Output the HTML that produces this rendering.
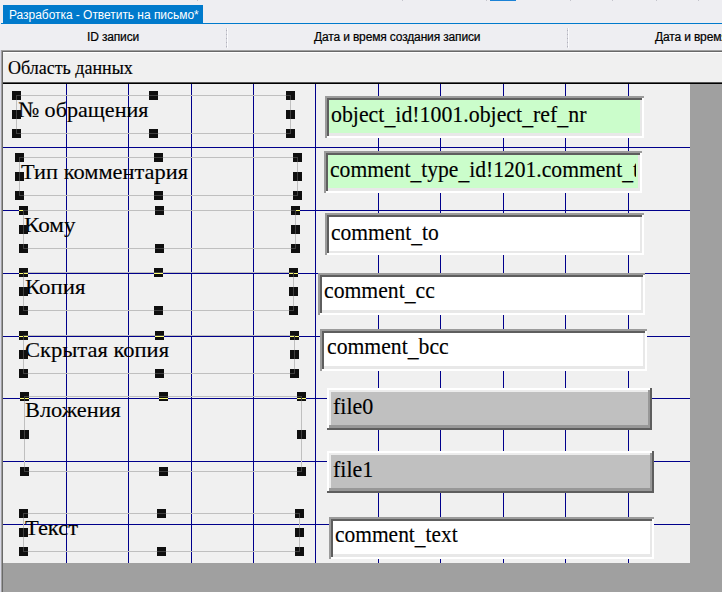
<!DOCTYPE html>
<html lang="ru"><head><meta charset="utf-8"><title>Разработка - Ответить на письмо</title>
<style>
html,body{margin:0;padding:0}
body{width:722px;height:592px;overflow:hidden;position:relative;background:#eeeef2;font-family:"Liberation Sans",sans-serif}
.a{position:absolute}
.tab{left:3px;top:5px;width:200px;height:19px;background:#007acc;color:#fff;font-size:12px;line-height:19px;white-space:nowrap}
.tab span{position:absolute;left:6px;top:0.5px;letter-spacing:-0.04px}
.tabline{left:1px;top:23px;width:721px;height:1px;background:#007acc}
.hdr{top:24px;height:26px;font-size:12px;color:#000;white-space:nowrap;line-height:26px;letter-spacing:-0.15px;-webkit-text-stroke:0.2px #000}
.sep{top:28px;width:1px;height:20px;background:repeating-linear-gradient(#d2d2da 0,#d2d2da 2px,#b2b2bc 2px,#b2b2bc 3px,#d2d2da 3px,#d2d2da 4px);border-right:1px solid #fbfbfd}
.ser{font-family:"Liberation Serif",serif;color:#000;white-space:nowrap;transform-origin:0 0;-webkit-text-stroke:0.15px #000}
.lab{font-size:22px;line-height:22px}
.ft{font-size:24px;line-height:24px}
.h{width:9px;height:9px;background:#0f0f0f;overflow:hidden}
.h i{position:absolute;display:block}
.vl{width:1px;background:#00008b;top:84px;height:479px}
.hl{height:1px;background:#00008b;left:3px;width:687px}
.rect{border:1px solid #bfbfbf;box-sizing:border-box}
.u{position:relative;top:2px}
.fld{box-sizing:border-box;overflow:hidden}
</style></head><body>

<div class="a" style="left:490px;top:0;width:26px;height:1px;background:#1b82d6"></div>
<div class="a" style="left:197px;top:0;width:1px;height:1px;background:#c4c4cc"></div>
<div class="a" style="left:402px;top:0;width:1px;height:1px;background:#c4c4cc"></div>
<div class="a" style="left:486px;top:0;width:1px;height:1px;background:#c4c4cc"></div>
<div class="a" style="left:570px;top:0;width:1px;height:1px;background:#c4c4cc"></div>
<div class="a" style="left:612px;top:0;width:1px;height:1px;background:#c4c4cc"></div>
<div class="a" style="left:656px;top:0;width:1px;height:1px;background:#c4c4cc"></div>
<div class="a" style="left:698px;top:0;width:1px;height:1px;background:#c4c4cc"></div>
<div class="a tabline"></div>
<div class="a tab"><span>Разработка - Ответить на письмо*</span></div>
<div class="a hdr" style="left:87px">ID записи</div>
<div class="a hdr" style="left:314px">Дата и время создания записи</div>
<div class="a hdr" style="left:655px">Дата и время изменения записи</div>
<div class="a sep" style="left:226px"></div><div class="a sep" style="left:567px"></div>
<div class="a" style="left:1px;top:50px;width:721px;height:542px;background:#a0a0a0"></div>
<div class="a" style="left:0;top:50px;width:1px;height:542px;background:#d8d8e6"></div>
<div class="a" style="left:1px;top:50px;width:721px;height:1px;background:#a0a0a0"></div>
<div class="a" style="left:1px;top:50px;width:1px;height:542px;background:#a0a0a0"></div>
<div class="a" style="left:2px;top:51px;width:720px;height:1px;background:#696969"></div>
<div class="a" style="left:2px;top:51px;width:1px;height:541px;background:#696969"></div>
<div class="a" style="left:3px;top:52px;width:719px;height:30px;background:#f0f0f0;border-top:1px solid #fff;box-sizing:border-box"></div>
<div class="a ser" style="left:8px;top:59.0px;font-size:18px;line-height:18px">Область данных</div>
<div class="a" style="left:3px;top:82px;width:719px;height:2px;background:#000;border-top:1px solid #555;box-sizing:border-box"></div>
<div class="a" style="left:3px;top:84px;width:687px;height:479px;background:#f0f0f0"></div>
<div class="a vl" style="left:66px"></div>
<div class="a vl" style="left:128px"></div>
<div class="a vl" style="left:191px"></div>
<div class="a vl" style="left:253px"></div>
<div class="a vl" style="left:315px"></div>
<div class="a vl" style="left:378px"></div>
<div class="a vl" style="left:440px"></div>
<div class="a vl" style="left:503px"></div>
<div class="a vl" style="left:565px"></div>
<div class="a vl" style="left:628px"></div>
<div class="a hl" style="top:147px"></div>
<div class="a hl" style="top:210px"></div>
<div class="a hl" style="top:273px"></div>
<div class="a hl" style="top:336px"></div>
<div class="a hl" style="top:398px"></div>
<div class="a hl" style="top:461px"></div>
<div class="a hl" style="top:524px"></div>
<div class="a fld" style="left:325px;top:96px;width:319px;height:42px;background:#9b9b9b"><div class="a" style="left:2px;top:2px;width:317px;height:40px;background:#fff"></div><div class="a" style="left:2px;top:2px;width:315px;height:38px;background:#5e5e5e"></div><div class="a" style="left:4px;top:4px;width:313px;height:36px;background:#e8e8e8"></div><div class="a" style="left:4px;top:4px;width:311px;height:33px;background:#cbfdcb"></div></div>
<div class="a" style="left:329px;top:100px;width:309px;height:33px;overflow:hidden"><div class="a ser ft" style="left:1.8px;top:1.5px;transform:scaleX(0.9104)">object<span class="u">_</span>id!1001.object<span class="u">_</span>ref<span class="u">_</span>nr</div></div>
<div class="a fld" style="left:324px;top:151px;width:318px;height:42px;background:#9b9b9b"><div class="a" style="left:2px;top:2px;width:316px;height:40px;background:#fff"></div><div class="a" style="left:2px;top:2px;width:314px;height:38px;background:#5e5e5e"></div><div class="a" style="left:4px;top:4px;width:312px;height:36px;background:#e8e8e8"></div><div class="a" style="left:4px;top:4px;width:310px;height:33px;background:#cbfdcb"></div></div>
<div class="a" style="left:328px;top:155px;width:308px;height:33px;overflow:hidden"><div class="a ser ft" style="left:1.9px;top:2.1px;transform:scaleX(0.9000)">comment<span class="u">_</span>type<span class="u">_</span>id!1201.comment<span class="u">_</span>t</div></div>
<div class="a fld" style="left:325px;top:213px;width:319px;height:42px;background:#9b9b9b"><div class="a" style="left:2px;top:2px;width:317px;height:40px;background:#fff"></div><div class="a" style="left:2px;top:2px;width:315px;height:38px;background:#5e5e5e"></div><div class="a" style="left:4px;top:4px;width:313px;height:36px;background:#e8e8e8"></div><div class="a" style="left:4px;top:4px;width:311px;height:34px;background:#ffffff"></div></div>
<div class="a" style="left:329px;top:217px;width:309px;height:33px;overflow:hidden"><div class="a ser ft" style="left:1.7px;top:2.5px;transform:scaleX(0.8979)">comment<span class="u">_</span>to</div></div>
<div class="a fld" style="left:318px;top:273px;width:327px;height:42px;background:#9b9b9b"><div class="a" style="left:2px;top:2px;width:325px;height:40px;background:#fff"></div><div class="a" style="left:2px;top:2px;width:323px;height:38px;background:#5e5e5e"></div><div class="a" style="left:4px;top:4px;width:321px;height:36px;background:#e8e8e8"></div><div class="a" style="left:4px;top:4px;width:319px;height:33px;background:#ffffff"></div></div>
<div class="a" style="left:322px;top:277px;width:317px;height:33px;overflow:hidden"><div class="a ser ft" style="left:2.2px;top:1.2px;transform:scaleX(0.9042)">comment<span class="u">_</span>cc</div></div>
<div class="a fld" style="left:320px;top:329px;width:327px;height:42px;background:#9b9b9b"><div class="a" style="left:2px;top:2px;width:325px;height:40px;background:#fff"></div><div class="a" style="left:2px;top:2px;width:323px;height:38px;background:#5e5e5e"></div><div class="a" style="left:4px;top:4px;width:321px;height:36px;background:#e8e8e8"></div><div class="a" style="left:4px;top:4px;width:319px;height:33px;background:#ffffff"></div></div>
<div class="a" style="left:324px;top:333px;width:317px;height:33px;overflow:hidden"><div class="a ser ft" style="left:3.0px;top:1.4px;transform:scaleX(0.9042)">comment<span class="u">_</span>bcc</div></div>
<div class="a fld" style="left:327px;top:388px;width:325px;height:42px;background:#5e5e5e"><div class="a" style="left:0px;top:0px;width:323px;height:40px;background:#fff"></div><div class="a" style="left:2px;top:2px;width:321px;height:38px;background:#989898"></div><div class="a" style="left:2px;top:2px;width:319px;height:35px;background:#ececec"></div><div class="a" style="left:4px;top:4px;width:317px;height:33px;background:#c0c0c0"></div></div>
<div class="a" style="left:331px;top:392px;width:315px;height:33px;overflow:hidden"><div class="a ser ft" style="left:1.9px;top:1.5px;transform:scaleX(0.9167)">file0</div></div>
<div class="a fld" style="left:327px;top:451px;width:327px;height:42px;background:#5e5e5e"><div class="a" style="left:0px;top:0px;width:325px;height:40px;background:#fff"></div><div class="a" style="left:2px;top:2px;width:323px;height:38px;background:#989898"></div><div class="a" style="left:2px;top:2px;width:321px;height:35px;background:#ececec"></div><div class="a" style="left:4px;top:4px;width:319px;height:33px;background:#c0c0c0"></div></div>
<div class="a" style="left:331px;top:455px;width:317px;height:33px;overflow:hidden"><div class="a ser ft" style="left:1.9px;top:1.6px;transform:scaleX(0.9167)">file1</div></div>
<div class="a fld" style="left:329px;top:517px;width:325px;height:42px;background:#9b9b9b"><div class="a" style="left:2px;top:2px;width:323px;height:40px;background:#fff"></div><div class="a" style="left:2px;top:2px;width:321px;height:38px;background:#5e5e5e"></div><div class="a" style="left:4px;top:4px;width:319px;height:36px;background:#e8e8e8"></div><div class="a" style="left:4px;top:4px;width:317px;height:33px;background:#ffffff"></div></div>
<div class="a" style="left:333px;top:521px;width:315px;height:33px;overflow:hidden"><div class="a ser ft" style="left:1.7px;top:1.2px;transform:scaleX(0.8937)">comment<span class="u">_</span>text</div></div>
<div class="a rect" style="left:16px;top:95px;width:275px;height:39px"></div>
<div class="a ser lab" style="left:17.8px;top:98.5px;transform:scaleX(1.005)">№ обращения</div>
<div class="a h" style="left:12px;top:91px"><i style="left:4px;top:4px;width:5px;height:1px;background:#404040"></i><i style="left:4px;top:4px;width:1px;height:5px;background:#404040"></i></div>
<div class="a h" style="left:12px;top:110px"><i style="left:4px;top:0px;width:1px;height:9px;background:#404040"></i></div>
<div class="a h" style="left:12px;top:129px"><i style="left:4px;top:4px;width:5px;height:1px;background:#404040"></i><i style="left:4px;top:0px;width:1px;height:5px;background:#404040"></i></div>
<div class="a h" style="left:149px;top:91px"><i style="left:0px;top:4px;width:9px;height:1px;background:#404040"></i></div>
<div class="a h" style="left:149px;top:129px"><i style="left:0px;top:4px;width:9px;height:1px;background:#404040"></i></div>
<div class="a h" style="left:286px;top:91px"><i style="left:0px;top:4px;width:5px;height:1px;background:#404040"></i><i style="left:4px;top:4px;width:1px;height:5px;background:#404040"></i></div>
<div class="a h" style="left:286px;top:110px"><i style="left:4px;top:0px;width:1px;height:9px;background:#404040"></i></div>
<div class="a h" style="left:286px;top:129px"><i style="left:0px;top:4px;width:5px;height:1px;background:#404040"></i><i style="left:4px;top:0px;width:1px;height:5px;background:#404040"></i></div>
<div class="a rect" style="left:19px;top:157px;width:279px;height:39px"></div>
<div class="a ser lab" style="left:20.8px;top:160.9px;transform:scaleX(1.018)">Тип комментария</div>
<div class="a h" style="left:15px;top:153px"><i style="left:4px;top:4px;width:5px;height:1px;background:#404040"></i><i style="left:4px;top:4px;width:1px;height:5px;background:#404040"></i></div>
<div class="a h" style="left:15px;top:172px"><i style="left:4px;top:0px;width:1px;height:9px;background:#404040"></i></div>
<div class="a h" style="left:15px;top:191px"><i style="left:4px;top:4px;width:5px;height:1px;background:#404040"></i><i style="left:4px;top:0px;width:1px;height:5px;background:#404040"></i></div>
<div class="a h" style="left:154px;top:153px"><i style="left:0px;top:4px;width:9px;height:1px;background:#404040"></i></div>
<div class="a h" style="left:154px;top:191px"><i style="left:0px;top:4px;width:9px;height:1px;background:#404040"></i></div>
<div class="a h" style="left:293px;top:153px"><i style="left:0px;top:4px;width:5px;height:1px;background:#404040"></i><i style="left:4px;top:4px;width:1px;height:5px;background:#404040"></i></div>
<div class="a h" style="left:293px;top:172px"><i style="left:4px;top:0px;width:1px;height:9px;background:#404040"></i></div>
<div class="a h" style="left:293px;top:191px"><i style="left:0px;top:4px;width:5px;height:1px;background:#404040"></i><i style="left:4px;top:0px;width:1px;height:5px;background:#404040"></i></div>
<div class="a rect" style="left:23px;top:210px;width:273px;height:39px"></div>
<div class="a ser lab" style="left:23.5px;top:213.6px;transform:scaleX(1.05)">Кому</div>
<div class="a h" style="left:19px;top:206px"><i style="left:0;top:4px;width:9px;height:1px;background:#ffff74"></i><i style="left:4px;top:4px;width:5px;height:1px;background:#404040"></i><i style="left:4px;top:4px;width:1px;height:5px;background:#404040"></i></div>
<div class="a h" style="left:19px;top:225px"><i style="left:4px;top:0px;width:1px;height:9px;background:#404040"></i></div>
<div class="a h" style="left:19px;top:244px"><i style="left:4px;top:4px;width:5px;height:1px;background:#404040"></i><i style="left:4px;top:0px;width:1px;height:5px;background:#404040"></i></div>
<div class="a h" style="left:155px;top:206px"><i style="left:0;top:4px;width:9px;height:1px;background:#ffff74"></i><i style="left:0px;top:4px;width:9px;height:1px;background:#404040"></i></div>
<div class="a h" style="left:155px;top:244px"><i style="left:0px;top:4px;width:9px;height:1px;background:#404040"></i></div>
<div class="a h" style="left:291px;top:206px"><i style="left:0;top:4px;width:9px;height:1px;background:#ffff74"></i><i style="left:0px;top:4px;width:5px;height:1px;background:#404040"></i><i style="left:4px;top:4px;width:1px;height:5px;background:#404040"></i></div>
<div class="a h" style="left:291px;top:225px"><i style="left:4px;top:0px;width:1px;height:9px;background:#404040"></i></div>
<div class="a h" style="left:291px;top:244px"><i style="left:0px;top:4px;width:5px;height:1px;background:#404040"></i><i style="left:4px;top:0px;width:1px;height:5px;background:#404040"></i></div>
<div class="a rect" style="left:23px;top:272px;width:271px;height:39px"></div>
<div class="a ser lab" style="left:24.6px;top:275.7px;transform:scaleX(1.039)">Копия</div>
<div class="a h" style="left:19px;top:268px"><i style="left:0;top:5px;width:9px;height:1px;background:#ffff74"></i><i style="left:4px;top:4px;width:5px;height:1px;background:#404040"></i><i style="left:4px;top:4px;width:1px;height:5px;background:#404040"></i></div>
<div class="a h" style="left:19px;top:287px"><i style="left:4px;top:0px;width:1px;height:9px;background:#404040"></i></div>
<div class="a h" style="left:19px;top:306px"><i style="left:4px;top:4px;width:5px;height:1px;background:#404040"></i><i style="left:4px;top:0px;width:1px;height:5px;background:#404040"></i></div>
<div class="a h" style="left:154px;top:268px"><i style="left:0;top:5px;width:9px;height:1px;background:#ffff74"></i><i style="left:0px;top:4px;width:9px;height:1px;background:#404040"></i></div>
<div class="a h" style="left:154px;top:306px"><i style="left:0px;top:4px;width:9px;height:1px;background:#404040"></i></div>
<div class="a h" style="left:289px;top:268px"><i style="left:0;top:5px;width:9px;height:1px;background:#ffff74"></i><i style="left:0px;top:4px;width:5px;height:1px;background:#404040"></i><i style="left:4px;top:4px;width:1px;height:5px;background:#404040"></i></div>
<div class="a h" style="left:289px;top:287px"><i style="left:4px;top:0px;width:1px;height:9px;background:#404040"></i></div>
<div class="a h" style="left:289px;top:306px"><i style="left:0px;top:4px;width:5px;height:1px;background:#404040"></i><i style="left:4px;top:0px;width:1px;height:5px;background:#404040"></i></div>
<div class="a rect" style="left:23px;top:335px;width:272px;height:39px"></div>
<div class="a ser lab" style="left:25.0px;top:339.1px;transform:scaleX(1.024)">Скрытая копия</div>
<div class="a h" style="left:19px;top:331px"><i style="left:0;top:5px;width:9px;height:1px;background:#ffff74"></i><i style="left:4px;top:4px;width:5px;height:1px;background:#404040"></i><i style="left:4px;top:4px;width:1px;height:5px;background:#404040"></i></div>
<div class="a h" style="left:19px;top:350px"><i style="left:4px;top:0px;width:1px;height:9px;background:#404040"></i></div>
<div class="a h" style="left:19px;top:369px"><i style="left:4px;top:4px;width:5px;height:1px;background:#404040"></i><i style="left:4px;top:0px;width:1px;height:5px;background:#404040"></i></div>
<div class="a h" style="left:155px;top:331px"><i style="left:0;top:5px;width:9px;height:1px;background:#ffff74"></i><i style="left:0px;top:4px;width:9px;height:1px;background:#404040"></i></div>
<div class="a h" style="left:155px;top:369px"><i style="left:0px;top:4px;width:9px;height:1px;background:#404040"></i></div>
<div class="a h" style="left:290px;top:331px"><i style="left:0;top:5px;width:9px;height:1px;background:#ffff74"></i><i style="left:0px;top:4px;width:5px;height:1px;background:#404040"></i><i style="left:4px;top:4px;width:1px;height:5px;background:#404040"></i></div>
<div class="a h" style="left:290px;top:350px"><i style="left:4px;top:0px;width:1px;height:9px;background:#404040"></i></div>
<div class="a h" style="left:290px;top:369px"><i style="left:0px;top:4px;width:5px;height:1px;background:#404040"></i><i style="left:4px;top:0px;width:1px;height:5px;background:#404040"></i></div>
<div class="a rect" style="left:24px;top:396px;width:278px;height:76px"></div>
<div class="a ser lab" style="left:25.0px;top:399.1px;transform:scaleX(1.015)">Вложения</div>
<div class="a h" style="left:20px;top:392px"><i style="left:0;top:6px;width:9px;height:1px;background:#ffff74"></i><i style="left:4px;top:4px;width:5px;height:1px;background:#404040"></i><i style="left:4px;top:4px;width:1px;height:5px;background:#404040"></i></div>
<div class="a h" style="left:20px;top:430px"><i style="left:4px;top:0px;width:1px;height:9px;background:#404040"></i></div>
<div class="a h" style="left:20px;top:467px"><i style="left:4px;top:4px;width:5px;height:1px;background:#404040"></i><i style="left:4px;top:0px;width:1px;height:5px;background:#404040"></i></div>
<div class="a h" style="left:159px;top:392px"><i style="left:0;top:6px;width:9px;height:1px;background:#ffff74"></i><i style="left:0px;top:4px;width:9px;height:1px;background:#404040"></i></div>
<div class="a h" style="left:159px;top:467px"><i style="left:0px;top:4px;width:9px;height:1px;background:#404040"></i></div>
<div class="a h" style="left:297px;top:392px"><i style="left:0;top:6px;width:9px;height:1px;background:#ffff74"></i><i style="left:0px;top:4px;width:5px;height:1px;background:#404040"></i><i style="left:4px;top:4px;width:1px;height:5px;background:#404040"></i></div>
<div class="a h" style="left:297px;top:430px"><i style="left:4px;top:0px;width:1px;height:9px;background:#404040"></i></div>
<div class="a h" style="left:297px;top:467px"><i style="left:0px;top:4px;width:5px;height:1px;background:#404040"></i><i style="left:4px;top:0px;width:1px;height:5px;background:#404040"></i></div>
<div class="a rect" style="left:23px;top:513px;width:277px;height:39px"></div>
<div class="a ser lab" style="left:25.0px;top:516.7px;transform:scaleX(1.022)">Текст</div>
<div class="a h" style="left:19px;top:509px"><i style="left:4px;top:4px;width:5px;height:1px;background:#404040"></i><i style="left:4px;top:4px;width:1px;height:5px;background:#404040"></i></div>
<div class="a h" style="left:19px;top:528px"><i style="left:4px;top:0px;width:1px;height:9px;background:#404040"></i></div>
<div class="a h" style="left:19px;top:547px"><i style="left:4px;top:4px;width:5px;height:1px;background:#404040"></i><i style="left:4px;top:0px;width:1px;height:5px;background:#404040"></i></div>
<div class="a h" style="left:157px;top:509px"><i style="left:0px;top:4px;width:9px;height:1px;background:#404040"></i></div>
<div class="a h" style="left:157px;top:547px"><i style="left:0px;top:4px;width:9px;height:1px;background:#404040"></i></div>
<div class="a h" style="left:295px;top:509px"><i style="left:0px;top:4px;width:5px;height:1px;background:#404040"></i><i style="left:4px;top:4px;width:1px;height:5px;background:#404040"></i></div>
<div class="a h" style="left:295px;top:528px"><i style="left:4px;top:0px;width:1px;height:9px;background:#404040"></i></div>
<div class="a h" style="left:295px;top:547px"><i style="left:0px;top:4px;width:5px;height:1px;background:#404040"></i><i style="left:4px;top:0px;width:1px;height:5px;background:#404040"></i></div>
</body></html>
